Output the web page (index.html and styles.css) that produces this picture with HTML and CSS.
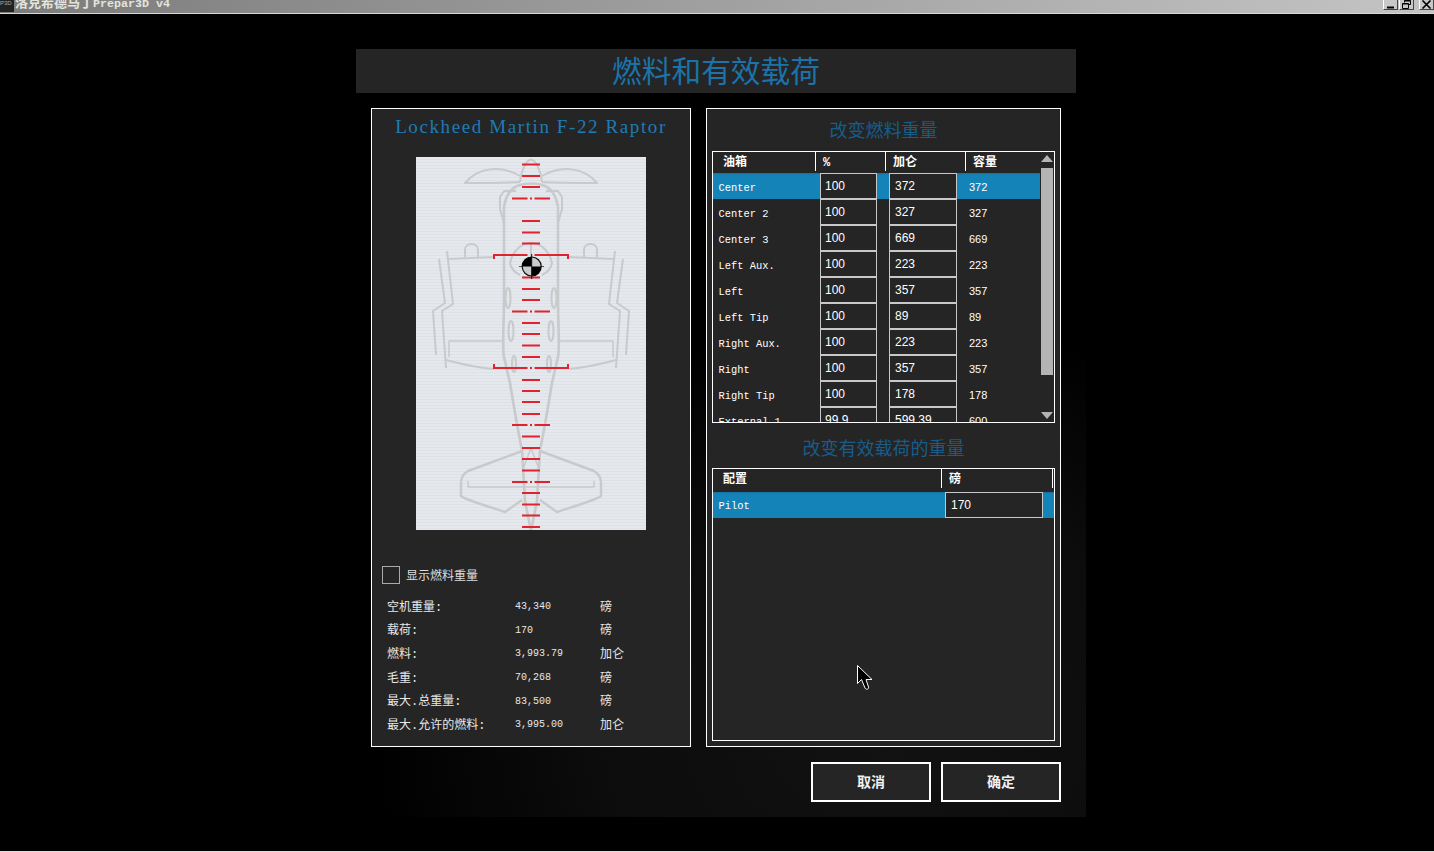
FILE: index.html
```html
<!DOCTYPE html>
<html lang="zh-CN">
<head>
    <meta charset="UTF-8">
    <title>Prepar3D v4</title>
    <link rel="stylesheet" href="styles.css">
</head>
<body>
    <header class="titlebar">
        <div class="app-icon">P3D</div>
        <div class="app-title">洛克希德马丁<span class="app-title-latin">Prepar3D v4</span></div>
        <div class="win-buttons">
            <button class="win-btn">
                <svg width="10" height="8" viewBox="0 0 10 8"><path d="M1 6.500h7" stroke="#000" stroke-width="2"/></svg>
            </button>
            <button class="win-btn">
                <svg width="11" height="9" viewBox="0 0 11 9" fill="none" stroke="#000"><path d="M3.500 2.500v-2h6v4h-2"/><path d="M1.500 3.500h6v5h-6z"/><path d="M3.500 1h6M1.500 4h6"/></svg>
            </button>
            <button class="win-btn close">
                <svg width="11" height="9" viewBox="0 0 11 9" fill="none" stroke="#000" stroke-width="1.6"><path d="M1.500 0.500l8 8M9.500 0.500l-8 8"/></svg>
            </button>
        </div>
    </header>

    <main class="dialog">
        <h1 class="dialog-title">燃料和有效载荷</h1>

        <div class="panels">
            <section class="panel left-panel">
                <h2 class="model-name">Lockheed Martin F-22 Raptor</h2>

                <div class="plane-view">
                    <svg width="230" height="373" viewBox="0 0 230 373" fill="none">
                        <g stroke="#c8cacc" stroke-width="2" stroke-linejoin="round">
                            <!-- spinner and blades -->
                            <path d="M104 25C105 14 110 3 115 2.500C120 3 125 14 126 25"/>
                            <path d="M104 19C85 8 62 10 49 26C68 26 88 26 104 25"/>
                            <path d="M126 19C145 8 168 10 181 26C162 26 142 26 126 25"/>
                            <!-- fuselage -->
                            <path stroke-width="2.600" d="M104 28C96 30 90 38 88 50V140C88 170 86 190 88 200L94 226C98 250 102 275 106 293L109 344L115 374L121 344L124 293C128 275 132 250 136 226L142 200C144 190 142 170 142 140V50C140 38 134 30 126 28C120 26 110 26 104 28Z"/>
                            <path d="M100 34H88L84 40V52L88 66M130 34H142L146 40V52L142 66"/>
                            <!-- canopy -->
                            <path d="M115 86C104 86 96 96 94 106C95 112 100 116 104 118M115 86C126 86 134 96 136 106C135 112 130 116 126 118M115 86V100"/>
                            <!-- wings -->
                            <path d="M32 102L78 100M198 102L152 100"/>
                            <path d="M49 100V93C49 85 62 85 62 93V100M181 100V93C181 85 168 85 168 93V100"/>
                            <path d="M23 102L29 146L17 154L20 198M207 102L201 146L213 154L210 198"/>
                            <path d="M31 94L37 147L26 154L30 211M199 94L193 147L204 154L200 211"/>
                            <path d="M30 203C45 207 62 211 78 212M200 203C185 207 168 211 152 212"/>
                            <path d="M87 184H33V200M143 184H197V200" stroke-width="1.500"/>
                            <!-- oval panels -->
                            <ellipse cx="92" cy="141" rx="2.500" ry="10"/>
                            <ellipse cx="138" cy="141" rx="2.500" ry="10"/>
                            <ellipse cx="95" cy="174" rx="2.500" ry="10"/>
                            <ellipse cx="135" cy="174" rx="2.500" ry="10"/>
                            <ellipse cx="98" cy="207" rx="2" ry="8"/>
                            <ellipse cx="133" cy="207" rx="2" ry="8"/>
                            <!-- tail -->
                            <path stroke-width="2.400" d="M106 294L52 314C47 317 45 321 45 326V339C47 342 80 352 89 355L106 343"/>
                            <path stroke-width="2.400" d="M124 294L178 314C183 317 185 321 185 326V339C183 342 150 352 141 355L124 343"/>
                            <path stroke-width="1.500" d="M52 324V330H178V324"/>
                            <path stroke-width="1.500" d="M107 312L115 291L123 312"/>
                        </g>

                        <!-- balance scale -->
                        <g stroke="#de2430" stroke-width="2">
                            <path d="M106 7.500H124M106 19H124M106 30H124M106 64H124M106 75.500H124M106 86.500H124M106 120.500H124M106 132H124M106 143H124M106 166H124M106 177H124M106 188.500H124M106 200H124M106 223H124M106 234H124M106 245H124M106 257H124M106 279.500H124M106 291H124M106 302H124M106 313.500H124M106 336H124M106 347.500H124M106 358.500H124M106 370H124"/>
                            <path d="M96 41.500H111.500M114 41.500H116M118.500 41.500H134"/>
                            <path d="M96 154.500H111.500M114 154.500H116M118.500 154.500H134"/>
                            <path d="M96 268H111.500M114 268H116M118.500 268H134"/>
                            <path d="M96 325H111.500M114 325H116M118.500 325H134"/>
                            <path d="M78 102V98H111.500M152 102V98H118.500"/>
                            <path d="M78 207V211H111.500M114 211H116M152 207V211H118.500"/>
                        </g>

                        <!-- centre of gravity -->
                        <g>
                            <path d="M103 109.500H128" stroke="#555" stroke-width="1"/>
                            <circle cx="115.700" cy="109.500" r="9.500" fill="#c9cbcd" stroke="#111" stroke-width="1.200"/>
                            <path d="M115.700 109.500V100A9.500 9.500 0 0 0 106.200 109.500ZM115.700 109.500V119A9.500 9.500 0 0 0 125.200 109.500Z" fill="#000"/>
                            <path d="M115.700 97V122" stroke="#111"/>
                        </g>
                    </svg>
                </div>

                <label class="check-row">
                    <span class="check-box"></span>
                    <span>显示燃料重量</span>
                </label>

                <div class="stats">
                    <div class="stat-name">空机重量:</div><div class="stat-value">43,340</div><div class="stat-unit">磅</div>
                    <div class="stat-name">载荷:</div><div class="stat-value">170</div><div class="stat-unit">磅</div>
                    <div class="stat-name">燃料:</div><div class="stat-value">3,993.79</div><div class="stat-unit">加仑</div>
                    <div class="stat-name">毛重:</div><div class="stat-value">70,268</div><div class="stat-unit">磅</div>
                    <div class="stat-name">最大.总重量:</div><div class="stat-value">83,500</div><div class="stat-unit">磅</div>
                    <div class="stat-name">最大.允许的燃料:</div><div class="stat-value">3,995.00</div><div class="stat-unit">加仑</div>
                </div>
            </section>

            <section class="panel right-panel">
                <h2 class="section-title">改变燃料重量</h2>

                <div class="table fuel-table">
                    <div class="table-head fuel-cols">
                        <div class="head-cell">油箱</div>
                        <div class="head-cell">%</div>
                        <div class="head-cell">加仑</div>
                        <div class="head-cell">容量</div>
                    </div>

                    <div class="fuel-row selected"><div class="row-name">Center</div><div class="cell-input">100</div><div class="cell-input second">372</div><div class="row-cap">372</div></div>
                    <div class="fuel-row"><div class="row-name">Center 2</div><div class="cell-input">100</div><div class="cell-input second">327</div><div class="row-cap">327</div></div>
                    <div class="fuel-row"><div class="row-name">Center 3</div><div class="cell-input">100</div><div class="cell-input second">669</div><div class="row-cap">669</div></div>
                    <div class="fuel-row"><div class="row-name">Left Aux.</div><div class="cell-input">100</div><div class="cell-input second">223</div><div class="row-cap">223</div></div>
                    <div class="fuel-row"><div class="row-name">Left</div><div class="cell-input">100</div><div class="cell-input second">357</div><div class="row-cap">357</div></div>
                    <div class="fuel-row"><div class="row-name">Left Tip</div><div class="cell-input">100</div><div class="cell-input second">89</div><div class="row-cap">89</div></div>
                    <div class="fuel-row"><div class="row-name">Right Aux.</div><div class="cell-input">100</div><div class="cell-input second">223</div><div class="row-cap">223</div></div>
                    <div class="fuel-row"><div class="row-name">Right</div><div class="cell-input">100</div><div class="cell-input second">357</div><div class="row-cap">357</div></div>
                    <div class="fuel-row"><div class="row-name">Right Tip</div><div class="cell-input">100</div><div class="cell-input second">178</div><div class="row-cap">178</div></div>
                    <div class="fuel-row"><div class="row-name">External 1</div><div class="cell-input">99.9</div><div class="cell-input second">599.39</div><div class="row-cap">600</div></div>

                    <div class="scrollbar">
                        <div class="arrow-up"></div>
                        <div class="thumb"></div>
                        <div class="arrow-down"></div>
                    </div>
                </div>

                <h2 class="section-title payload-title">改变有效载荷的重量</h2>

                <div class="table payload-table">
                    <div class="table-head payload-cols">
                        <div class="head-cell">配置</div>
                        <div class="head-cell">磅</div>
                        <div class="head-cell"></div>
                    </div>
                    <div class="payload-row selected">
                        <div class="row-name">Pilot</div>
                        <div class="cell-input">170</div>
                    </div>
                </div>
            </section>
        </div>

        <div class="actions">
            <button class="action-btn">取消</button>
            <button class="action-btn">确定</button>
        </div>
    </main>

    <svg class="cursor" width="17" height="27" viewBox="0 0 17 27">
        <path d="M.5.5V18.500L4.500 14.500L8 23C9 25 12 24.500 11.500 22L9 14.500H15Z" fill="#000" stroke="#fff"/>
    </svg>
</body>
</html>
```

FILE: styles.css
```css
body {
    margin: 0;
    height: 851px;
    overflow: hidden;
    background: #000 radial-gradient(ellipse 520px 420px at 540px 640px, #121212 0%, #0c0c0c 55%, #000 100%) no-repeat 346px 93px / 740px 724px;
    border-bottom: 1px solid #ddd;
    color: #fff;
    font-family: "Liberation Mono", "Noto Sans CJK SC", monospace;
}

.titlebar {
    display: flex;
    align-items: flex-start;
    height: 13px;
    background: linear-gradient(to right, #7c7c7c, #c4c4c4);
    border-bottom: 1px solid #d8d8d8;
    overflow: hidden;
}

.app-icon {
    width: 14px;
    height: 12px;
    background: #222;
    color: #aaa;
    font: 6px "Liberation Sans", sans-serif;
}

.app-title {
    margin: -4px 0 0 1px;
    font-size: 13px;
    font-weight: bold;
    line-height: 16px;
    color: #e4e4dc;
}

.app-title-latin {
    font-size: 11.67px;
}

.win-buttons {
    display: flex;
    gap: 1px;
    margin-left: auto;
}

.win-btn {
    display: flex;
    align-items: flex-end;
    justify-content: center;
    width: 15px;
    height: 10px;
    padding: 0;
    background: #c8c8c8;
    border: none;
    border-right: 1px solid #444;
    border-bottom: 1px solid #444;
    border-left: 1px solid #fff;
}

.win-btn.close {
    margin-left: 4px;
}

.dialog {
    width: 720px;
    margin: 35px 0 0 356px;
}

.dialog-title {
    height: 44px;
    margin: 0;
    background: #252525;
    color: #1b73aa;
    font-size: 29.7px;
    font-weight: normal;
    line-height: 50px;
    text-align: center;
}

.panels {
    display: flex;
    gap: 15px;
    margin: 15px 15px 0;
}

.panel {
    box-sizing: border-box;
    height: 639px;
    background: #252525;
    border: 1px solid #fff;
}

.left-panel {
    width: 320px;
}

.right-panel {
    display: flex;
    flex-direction: column;
    width: 355px;
    padding: 0 5px 5px;
}

.model-name {
    margin: 0 0 12px;
    color: #1e7bb5;
    font-family: "Liberation Serif", "Noto Sans CJK SC", serif;
    font-size: 19px;
    font-weight: normal;
    letter-spacing: 1.6px;
    line-height: 36px;
    text-align: center;
}

.plane-view {
    width: 230px;
    height: 373px;
    margin-left: 44px;
    background: repeating-linear-gradient(#e5e8ec 0, #e5e8ec 2px, #dee1e6 2px, #dee1e6 3px);
}

.plane-view svg {
    display: block;
}

.check-row {
    display: flex;
    align-items: center;
    gap: 6px;
    margin: 36px 0 0 10px;
    color: #ddd;
    font-size: 12px;
}

.check-box {
    box-sizing: border-box;
    width: 18px;
    height: 18px;
    border: 1px solid #aaa;
}

.stats {
    display: grid;
    grid-template-columns: 128px 85px 1fr;
    grid-auto-rows: 23.6px;
    align-items: center;
    margin: 10px 0 0 15px;
    color: #e8e8e8;
    font-size: 12px;
}

.stat-value {
    padding-top: 2px;
    font-size: 10px;
}

.section-title {
    flex: none;
    height: 42px;
    margin: 0;
    color: #175d8b;
    font-size: 18px;
    font-weight: normal;
    line-height: 46px;
    text-align: center;
}

.payload-title {
    height: 45px;
    line-height: 54px;
}

.table {
    position: relative;
    box-sizing: border-box;
    border: 1px solid #fff;
    overflow: hidden;
}

.fuel-table {
    flex: none;
    height: 272px;
}

.payload-table {
    flex: 1;
}

.table-head {
    display: grid;
    grid-template-rows: 19px;
    height: 19px;
    margin-bottom: 2px;
}

.fuel-cols {
    grid-template-columns: 102px 70px 80px 1fr;
}

.payload-cols {
    grid-template-columns: 228px 111px 1fr;
}

.head-cell {
    box-sizing: border-box;
    height: 19px;
    padding: 4px 0 0 7px;
    border-left: 1px solid #fff;
    font-size: 12px;
    font-weight: bold;
    line-height: 15px;
}

.head-cell:first-child {
    padding-left: 10px;
    border-left: none;
}

.fuel-row {
    display: grid;
    grid-template-columns: 107px 57px 80px 83px;
    align-items: center;
    width: 327px;
    height: 26px;
    font-size: 10.4px;
}

.fuel-row .second {
    width: 68px;
    margin-left: 12px;
    padding-left: 5px;
}

.selected {
    background: linear-gradient(#1a6f9e 0, #1484b8 2px);
}

.row-name {
    padding: 4px 0 0 5.500px;
}

.cell-input {
    box-sizing: border-box;
    height: 26px;
    padding-left: 4px;
    background: #252525;
    border: 1px solid #c8c8c8;
    font: 12px/24px "Liberation Sans", sans-serif;
}

.row-cap {
    padding: 2px 0 0 12px;
    font: 11px "Liberation Sans", sans-serif;
}

.scrollbar {
    position: absolute;
    top: 3px;
    right: 1px;
    bottom: 3px;
    width: 12px;
}

.thumb {
    position: absolute;
    top: 13px;
    left: 0;
    width: 12px;
    height: 207px;
    background: #b4b4b4;
}

.arrow-up,
.arrow-down {
    position: absolute;
    left: 0;
    width: 0;
    height: 0;
    border-right: 6px solid transparent;
    border-left: 6px solid transparent;
}

.arrow-up {
    top: 0;
    border-bottom: 7px solid #b4b4b4;
}

.arrow-down {
    bottom: 0;
    border-top: 7px solid #b4b4b4;
}

.payload-row {
    display: flex;
    align-items: center;
    justify-content: space-between;
    height: 26px;
    margin-top: 4px;
    padding-right: 11px;
    font-size: 10.4px;
}

.payload-row .row-name {
    padding-top: 2px;
}

.payload-row .cell-input {
    width: 98px;
    padding-left: 5px;
}

.actions {
    display: flex;
    justify-content: flex-end;
    gap: 10px;
    margin: 15px 15px 0;
}

.action-btn {
    width: 120px;
    height: 40px;
    padding: 0 0 2px;
    background: #252525;
    border: 2px solid #fff;
    color: #f0f0f0;
    font-family: "Noto Sans CJK SC", sans-serif;
    font-size: 14px;
    font-weight: bold;
}

.cursor {
    position: absolute;
    top: 665px;
    left: 857px;
}
```
